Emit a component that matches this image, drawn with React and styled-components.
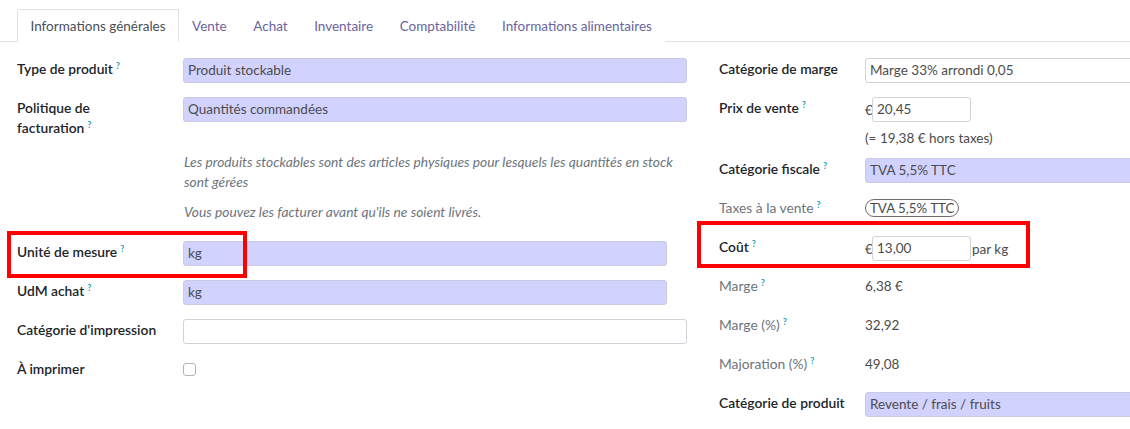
import React from "react";
import styled, { createGlobalStyle } from "styled-components";

const GlobalStyle = createGlobalStyle`
  html, body { margin: 0; padding: 0; background: #fff; }
  body {
    font-family: "Lato", "Noto Sans", sans-serif;
    font-size: 13px;
    color: #212529;
    overflow: hidden;
    width: 1130px;
    height: 429px;
  }
  * { box-sizing: border-box; }
`;

const Page = styled.div`
  width: 1130px;
  height: 429px;
  overflow: hidden;
`;

const TabBar = styled.div`
  display: flex;
  padding: 9px 0 0 17px;
  border-bottom: 1px solid #dee2e6;
`;

const Tab = styled.div`
  height: 33px;
  line-height: 32px;
  padding: 0 12px 0 12.5px;
  margin-bottom: -1px;
  font-size: 13.5px;
  color: ${(p) => (p.$active ? "#495057" : "#6a64a0")};
  background: #fff;
  border: 1px solid ${(p) => (p.$active ? "#dee2e6" : "transparent")};
  border-bottom-color: ${(p) => (p.$active ? "#fff" : "transparent")};
  border-radius: 2px 2px 0 0;
  white-space: nowrap;
`;

const Body = styled.div`
  display: flex;
  padding: 16px 0 0 17px;
`;

const Group = styled.div`
  flex: none;
  width: ${(p) => p.$width}px;
  margin-left: ${(p) => p.$offset || 0}px;
`;

const Row = styled.div`
  position: relative;
  display: grid;
  grid-template-columns: ${(p) => p.$labelWidth}px 1fr;
  min-height: 25px;
  margin-bottom: ${(p) => (p.$gap !== undefined ? p.$gap : 14)}px;
`;

const Label = styled.div`
  font-weight: ${(p) => (p.$muted ? 400 : 600)};
  color: ${(p) => (p.$muted ? "#6c757d" : "#212529")};
  line-height: 20px;
  padding-top: 1px;
  padding-right: 8px;
  font-size: 13.8px;
`;

const Help = styled.sup`
  font-size: 9px;
  font-weight: 700;
  color: #17a2b8;
  margin-left: 3px;
  vertical-align: 5px;
  line-height: 0;
`;

const Field = styled.div`
  height: 25px;
  width: ${(p) => (p.$width ? `${p.$width}px` : "100%")};
  border: 1px solid ${(p) => (p.$plain ? "#cfd4da" : "#c9c9e4")};
  border-radius: 3px;
  background: ${(p) => (p.$plain ? "#fff" : "#d2d2ff")};
  padding: 0 4px;
  line-height: 23px;
  color: #4c4c4c;
  font-size: 13.5px;
  white-space: nowrap;
  overflow: hidden;
`;

const Value = styled.div`
  line-height: 20px;
  padding-top: 1px;
  color: #4c4c4c;
  font-size: 13.5px;
`;

const Monetary = styled.div`
  display: flex;
  align-items: center;
  height: 25px;
  color: #4c4c4c;
  font-size: 13.5px;
`;

const Currency = styled.span`
  width: 7px;
  overflow: visible;
`;

const AmountInput = styled.div`
  width: 99px;
  height: 25px;
  border: 1px solid #cfd4da;
  border-radius: 3px;
  background: #fff;
  padding: 0 4px;
  line-height: 23px;
`;

const Unit = styled.span`
  margin-left: 1px;
`;

const SubNote = styled.div`
  margin-top: 6px;
  line-height: 20px;
  color: #4c4c4c;
  font-size: 13.5px;
`;

const Badge = styled.span`
  display: inline-block;
  margin-top: 2px;
  height: 18px;
  line-height: 16px;
  padding: 0 4px;
  border: 1px solid #6c6c6c;
  border-radius: 9px;
  color: #4c4c4c;
  font-size: 13.3px;
`;

const Checkbox = styled.span`
  display: block;
  margin-top: 5px;
  width: 13px;
  height: 13px;
  border: 1px solid #adb5bd;
  border-radius: 3px;
  background: #fff;
`;

const HelpBlock = styled.div`
  margin: 1px 0 19px 167px;
  width: 505px;
  font-style: italic;
  color: #6c757d;
  font-size: 13.8px;
  line-height: 20px;
`;

const HelpPara = styled.p`
  margin: 0 0 ${(p) => (p.$last ? 0 : 10)}px;
`;

const Highlight = styled.div`
  position: absolute;
  left: ${(p) => p.$left}px;
  top: ${(p) => p.$top}px;
  width: ${(p) => p.$w}px;
  height: ${(p) => p.$h}px;
  border: 4px solid #ff0000;
  pointer-events: none;
`;

const tabs = [
  "Informations générales",
  "Vente",
  "Achat",
  "Inventaire",
  "Comptabilité",
  "Informations alimentaires",
];

const Q = () => <Help>?</Help>;

export default function App() {
  return (
    <Page>
      <GlobalStyle />
      <TabBar>
        {tabs.map((t, i) => (
          <Tab key={t} $active={i === 0}>
            {t}
          </Tab>
        ))}
      </TabBar>
      <Body>
        <Group $width={670}>
          <Row $labelWidth={166}>
            <Label>
              Type de produit
              <Q />
            </Label>
            <Field $width={504}>Produit stockable</Field>
          </Row>
          <Row $labelWidth={166}>
            <Label>
              Politique de
              <br />
              facturation
              <Q />
            </Label>
            <Field $width={504}>Quantités commandées</Field>
          </Row>
          <HelpBlock>
            <HelpPara>
              Les produits stockables sont des articles physiques pour lesquels
              les quantités en stock sont gérées
            </HelpPara>
            <HelpPara $last>
              Vous pouvez les facturer avant qu'ils ne soient livrés.
            </HelpPara>
          </HelpBlock>
          <Row $labelWidth={166}>
            <Label>
              Unité de mesure
              <Q />
            </Label>
            <Field $width={484}>kg</Field>
            <Highlight $left={-10} $top={-10} $w={240} $h={47} />
          </Row>
          <Row $labelWidth={166}>
            <Label>
              UdM achat
              <Q />
            </Label>
            <Field $width={484}>kg</Field>
          </Row>
          <Row $labelWidth={166}>
            <Label>Catégorie d'impression</Label>
            <Field $width={504} $plain />
          </Row>
          <Row $labelWidth={166}>
            <Label>À imprimer</Label>
            <div>
              <Checkbox />
            </div>
          </Row>
        </Group>

        <Group $width={430} $offset={32}>
          <Row $labelWidth={146}>
            <Label>Catégorie de marge</Label>
            <Field $plain>Marge 33% arrondi 0,05</Field>
          </Row>
          <Row $labelWidth={146} $gap={10}>
            <Label>
              Prix de vente
              <Q />
            </Label>
            <div>
              <Monetary>
                <Currency>€</Currency>
                <AmountInput>20,45</AmountInput>
              </Monetary>
              <SubNote>(= 19,38 € hors taxes)</SubNote>
            </div>
          </Row>
          <Row $labelWidth={146}>
            <Label>
              Catégorie fiscale
              <Q />
            </Label>
            <Field>TVA 5,5% TTC</Field>
          </Row>
          <Row $labelWidth={146}>
            <Label $muted>
              Taxes à la vente
              <Q />
            </Label>
            <div>
              <Badge>TVA 5,5% TTC</Badge>
            </div>
          </Row>
          <Row $labelWidth={146}>
            <Label>
              Coût
              <Q />
            </Label>
            <Monetary>
              <Currency>€</Currency>
              <AmountInput>13,00</AmountInput>
              <Unit>par kg</Unit>
            </Monetary>
            <Highlight $left={-22} $top={-15} $w={333} $h={47} />
          </Row>
          <Row $labelWidth={146}>
            <Label $muted>
              Marge
              <Q />
            </Label>
            <Value>6,38 €</Value>
          </Row>
          <Row $labelWidth={146}>
            <Label $muted>
              Marge (%)
              <Q />
            </Label>
            <Value>32,92</Value>
          </Row>
          <Row $labelWidth={146}>
            <Label $muted>
              Majoration (%)
              <Q />
            </Label>
            <Value>49,08</Value>
          </Row>
          <Row $labelWidth={146}>
            <Label>Catégorie de produit</Label>
            <Field>Revente / frais / fruits</Field>
          </Row>
        </Group>
      </Body>
    </Page>
  );
}
